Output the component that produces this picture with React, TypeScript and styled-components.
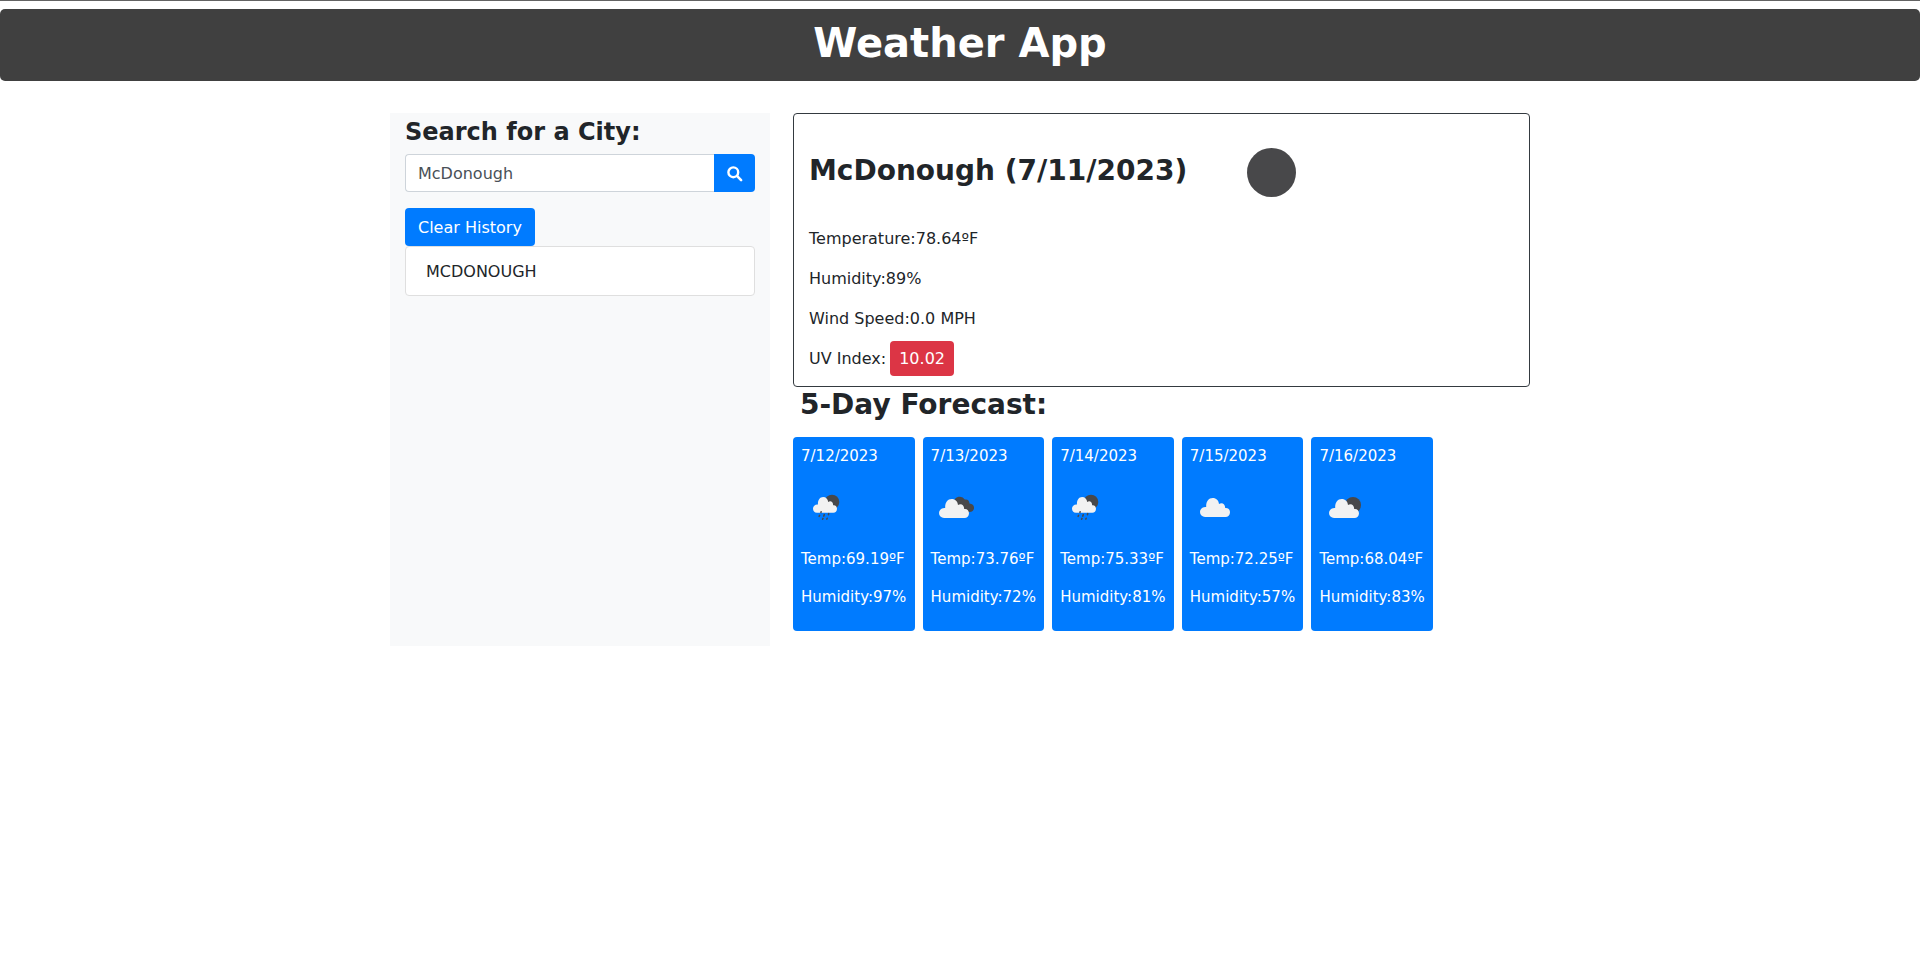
import React, { useState } from "react";
import styled, { createGlobalStyle } from "styled-components";

const GlobalStyle = createGlobalStyle`
  *, *::before, *::after { box-sizing: border-box; }
  body {
    margin: 0;
    background: #fff;
    color: #212529;
    font: 400 16px/24px Verdana, "DejaVu Sans", sans-serif;
  }
  h1, h2, h3, p, ul { margin: 0; padding: 0; }
  button, input { font: inherit; }
`;

const Page = styled.div`
  border-top: 1px solid #636363;
  padding-top: 8px;
`;

const Banner = styled.header`
  height: 72px;
  padding: 10px 16px;
  border-radius: 5px;
  background: #404040;
  color: #fff;
  text-align: center;
`;

const Title = styled.h1`
  font-size: 40px;
  line-height: 48px;
`;

const Container = styled.main`
  display: grid;
  grid-template-columns: minmax(0, 380fr) minmax(0, 737fr);
  gap: 23px;
  max-width: 1140px;
  margin: 32px auto 0;
`;

const Sidebar = styled.aside`
  padding: 2px 15px 0;
  background: #f8f9fa;
`;

const Heading = styled.h2<{ $size: number }>`
  font-size: ${(p) => p.$size}px;
  line-height: 34px;
`;

const SearchForm = styled.form`
  display: flex;
  margin: 5px 0 16px;
`;

const SearchInput = styled.input`
  flex: 1;
  min-width: 0;
  height: 38px;
  padding: 6px 12px;
  border: 1px solid #ced4da;
  border-right: 0;
  border-radius: 4px 0 0 4px;
  background: #fff;
  color: #495057;
  outline: none;
`;

const Button = styled.button<{ $attached?: boolean }>`
  height: 38px;
  padding: 7px 13px 6px;
  border: 0;
  border-radius: ${(p) => (p.$attached ? "0 4px 4px 0" : "4px")};
  background: #007bff;
  color: #fff;
  cursor: pointer;
  svg { display: block; overflow: visible; }
`;

const History = styled.ul`
  list-style: none;
`;

const HistoryItem = styled.li`
  padding: 13px 20px 11px;
  border: 1px solid #dfdfdf;
  border-radius: 4px;
  background: #fff;
  text-transform: uppercase;
`;

const Current = styled.section`
  height: 274px;
  padding: 8px 15px 0;
  border: 1px solid #343a40;
  border-radius: 4px;
`;

const CityRow = styled.div`
  display: flex;
  align-items: center;
  height: 100px;
  margin-bottom: 5px;
  gap: 60px;
  h2 { padding-bottom: 2px; }
`;

const Reading = styled.p`
  height: 24px;
  margin-bottom: 16px;
`;

const Badge = styled.span`
  display: inline-block;
  margin: -6px 0;
  padding: 6px 9px 5px;
  border-radius: 4px;
  background: #dc3545;
  color: #fff;
`;

const UvReading = styled(Reading)`
  display: flex;
  align-items: baseline;
  gap: 4px;
`;

const ForecastHead = styled.div`
  padding: 1px 7px 15px;
`;

const Days = styled.div`
  display: grid;
  grid-template-columns: repeat(5, minmax(0, 1fr));
  gap: 8px;
  max-width: 640px;
  margin-bottom: 15px;
`;

const Day = styled.article`
  height: 194px;
  padding: 8px;
  border-radius: 4px;
  background: #007bff;
  color: #fff;
  font-size: 15px;
  line-height: 22px;
  white-space: nowrap;
  svg { display: block; margin: 16px 0 15px; }
  p + p { margin-top: 16px; }
`;

type Sky = "rain" | "broken" | "cloud" | "few";

function Cloud() {
  return (
    <path
      fill="#f2f2f2"
      d="M5 19a5 5 0 0 1-5-5c0-3 3-5.500 6.200-5C5.800 4 8.500 0 12.700 0c3.500 0 6 2.500 6.300 6 3-2 6.200 0 6.200 4C28 9.500 30 11.500 30 14.300c0 3-2 4.700-4.500 4.700z"
    />
  );
}

function SkyIcon({ sky }: { sky: Sky }) {
  return (
    <svg width="50" height="50" viewBox="0 0 50 50" aria-hidden="true">
      {sky === "rain" && (
        <>
          <circle cx="31" cy="19" r="7.300" fill="#48484a" />
          <g transform="translate(12 14) scale(.8 .83)">
            <Cloud />
          </g>
          <g stroke="#48484a" strokeWidth="1.500" strokeLinecap="round">
            <path d="M20.100 28.800l-.2.600M18.600 32.400l-.5 1M23.300 31.600l-.6 1.500M27.800 30.600l-.4 1M22 35.400l-.4.900M26.200 35.200l-.4.900" />
          </g>
        </>
      )}
      {sky === "broken" && (
        <>
          <path
            fill="#48484a"
            d="M23 19a5.800 5.800 0 0 1 10.800-2.400c2.700-.7 4.600 1 4.700 4 3 .2 4.700 2 4.500 4.600-.2 2.600-2.200 4-5 3.800L30 28z"
          />
          <g transform="translate(8 16)">
            <Cloud />
          </g>
        </>
      )}
      {sky === "cloud" && (
        <g transform="translate(10 15)">
          <Cloud />
        </g>
      )}
      {sky === "few" && (
        <>
          <circle cx="34" cy="22" r="8" fill="#48484a" />
          <g transform="translate(10 16)">
            <Cloud />
          </g>
        </>
      )}
    </svg>
  );
}

const days: { date: string; sky: Sky; temp: string; humidity: number }[] = [
  { date: "7/12/2023", sky: "rain", temp: "69.19", humidity: 97 },
  { date: "7/13/2023", sky: "broken", temp: "73.76", humidity: 72 },
  { date: "7/14/2023", sky: "rain", temp: "75.33", humidity: 81 },
  { date: "7/15/2023", sky: "cloud", temp: "72.25", humidity: 57 },
  { date: "7/16/2023", sky: "few", temp: "68.04", humidity: 83 },
];

export default function App() {
  const [city, setCity] = useState("McDonough");
  return (
    <Page>
      <GlobalStyle />
      <Banner>
        <Title>Weather App</Title>
      </Banner>
      <Container>
        <Sidebar>
          <Heading $size={24} as="h3">
            <label htmlFor="city">Search for a City:</label>
          </Heading>
          <SearchForm onSubmit={(e) => e.preventDefault()}>
            <SearchInput
              id="city"
              value={city}
              onChange={(e) => setCity(e.target.value)}
            />
            <Button $attached aria-label="Search">
              <svg width="15" height="16" viewBox="0 0 15 16" fill="none" stroke="#fff">
                <circle cx="6.300" cy="6.300" r="4.900" strokeWidth="2.400" />
                <path d="M10.200 10.200l3.900 3.900" strokeWidth="2.600" strokeLinecap="round" />
              </svg>
            </Button>
          </SearchForm>
          <Button type="button">Clear History</Button>
          <History>
            <HistoryItem>McDonough</HistoryItem>
          </History>
        </Sidebar>
        <div>
          <Current>
            <CityRow>
              <Heading $size={28}>McDonough (7/11/2023)</Heading>
              <svg width="49" height="49" viewBox="0 0 49 49" aria-hidden="true">
                <circle cx="24.500" cy="24.500" r="24.500" fill="#48484a" />
              </svg>
            </CityRow>
            <Reading>Temperature:78.64ºF</Reading>
            <Reading>Humidity:89%</Reading>
            <Reading>Wind Speed:0.0 MPH</Reading>
            <UvReading>
              UV Index:<Badge>10.02</Badge>
            </UvReading>
          </Current>
          <ForecastHead>
            <Heading $size={28}>5-Day Forecast:</Heading>
          </ForecastHead>
          <Days>
            {days.map((d) => (
              <Day key={d.date}>
                <p>{d.date}</p>
                <SkyIcon sky={d.sky} />
                <p>Temp:{d.temp}ºF</p>
                <p>Humidity:{d.humidity}%</p>
              </Day>
            ))}
          </Days>
        </div>
      </Container>
    </Page>
  );
}
